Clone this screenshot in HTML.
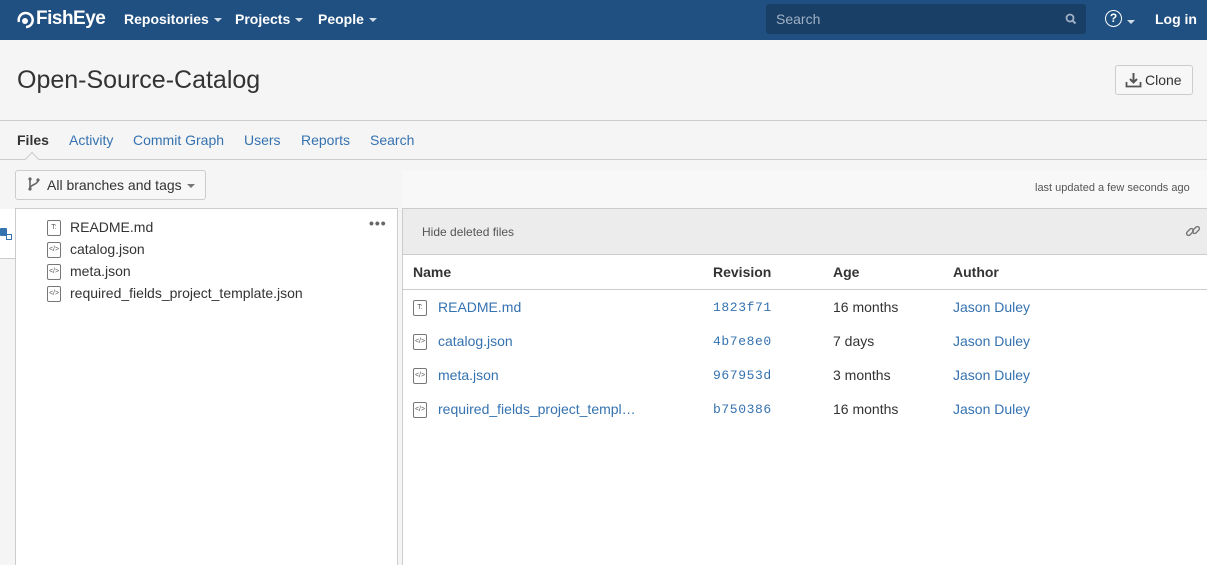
<!DOCTYPE html>
<html><head><style>
*{margin:0;padding:0;box-sizing:border-box}
body{width:1207px;height:565px;overflow:hidden;background:#f5f5f5;font-family:"Liberation Sans",sans-serif;font-size:14px;color:#333;position:relative}
.abs{position:absolute}
.nav{left:0;top:0;width:1207px;height:40px;background:#205081}
.nt{position:absolute;color:#fff;font-weight:bold;font-size:14px;top:11px;white-space:nowrap}
.caret{display:inline-block;width:0;height:0;border-left:4px solid transparent;border-right:4px solid transparent;border-top:4px solid currentColor;vertical-align:middle;margin-left:5px;opacity:.8}
a{color:#3572b0;text-decoration:none}
.tab{top:132px;font-size:14px;color:#3572b0}
.ic{display:inline-block;width:14px;height:16px;border:1px solid #777;border-radius:2px;font-size:7px;color:#555;text-align:center;line-height:14px;vertical-align:middle}
.lrow{left:47px;font-size:14px;color:#333}
.lrow .ic{margin-right:9px}
.mono{font-family:"Liberation Mono",monospace;font-size:13px;color:#3572b0;letter-spacing:0.6px}
</style></head><body>
<div class="abs nav"></div>
<svg class="abs" style="left:16px;top:10px" width="20" height="20" viewBox="0 0 20 20"><path d="M3 12 A7 7 0 1 1 10 17" fill="none" stroke="#fff" stroke-width="2.5"/><circle cx="9" cy="11" r="3" fill="#fff"/></svg>
<div class="nt" style="left:36px;top:8px;font-size:19px;letter-spacing:-0.5px">FishEye</div>
<div class="nt" style="left:124px">Repositories<span class="caret"></span></div>
<div class="nt" style="left:235px">Projects<span class="caret"></span></div>
<div class="nt" style="left:318px">People<span class="caret"></span></div>
<div class="abs" style="left:766px;top:4px;width:320px;height:30px;background:#1a3f66;border-radius:3px"></div>
<div class="abs" style="left:776px;top:11px;color:#9fb0c4;font-size:14px">Search</div>
<svg class="abs" style="left:1065px;top:13px" width="12" height="12" viewBox="0 0 12 12"><circle cx="5" cy="5" r="3.5" fill="none" stroke="#9fb0c4" stroke-width="1.8"/><path d="M7.5 7.5L10.5 10.5" stroke="#9fb0c4" stroke-width="2"/></svg>
<div class="abs" style="left:1105px;top:10px;width:17px;height:17px;border:1.6px solid #fff;border-radius:50%;color:#fff;font-size:12px;font-weight:bold;text-align:center;line-height:14px">?</div>
<div class="abs" style="left:1122px;top:13px;color:#fff"><span class="caret"></span></div>
<div class="nt" style="left:1155px">Log in</div>

<div class="abs" style="left:17px;top:66px;font-size:25px;color:#333">Open-Source-Catalog</div>
<div class="abs" style="left:1115px;top:65px;width:78px;height:30px;border:1px solid #ccc;border-radius:3px;background:#f7f7f7"></div>
<svg class="abs" style="left:1125px;top:72px" width="17" height="16" viewBox="0 0 17 16"><path d="M8.5 1v9M5 7l3.5 3.5L12 7" fill="none" stroke="#555" stroke-width="2"/><path d="M1.5 10v4.5h14V10" fill="none" stroke="#555" stroke-width="1.8"/></svg>
<div class="abs" style="left:1145px;top:72px;font-size:14px;color:#333">Clone</div>
<div class="abs" style="left:0;top:120px;width:1207px;height:1px;background:#ccc"></div>
<div class="abs tab" style="left:17px;color:#333;font-weight:bold">Files</div>
<div class="abs tab" style="left:69px">Activity</div>
<div class="abs tab" style="left:133px">Commit Graph</div>
<div class="abs tab" style="left:244px">Users</div>
<div class="abs tab" style="left:301px">Reports</div>
<div class="abs tab" style="left:370px">Search</div>
<div class="abs" style="left:0;top:159px;width:1207px;height:1px;background:#ccc"></div>
<div class="abs" style="left:27px;top:154px;width:10px;height:10px;background:#f5f5f5;border-left:1px solid #ccc;border-top:1px solid #ccc;transform:rotate(45deg)"></div>

<div class="abs" style="left:15px;top:170px;width:191px;height:30px;border:1px solid #ccc;border-radius:3px;background:#f7f7f7"></div>
<svg class="abs" style="left:27px;top:177px" width="14" height="14" viewBox="0 0 14 14"><circle cx="3" cy="2" r="1.6" fill="#666"/><circle cx="3" cy="12" r="1.6" fill="#666"/><circle cx="11" cy="3" r="1.6" fill="#666"/><path d="M3 2v10M11 3c0 5-8 4-8 9" fill="none" stroke="#666" stroke-width="1.6"/></svg>
<div class="abs" style="left:47px;top:177px;font-size:14px;color:#333">All branches and tags<span class="caret" style="color:#555"></span></div>
<div class="abs" style="left:402px;top:170px;width:805px;height:38px;background:#f8f8f8"></div>
<div class="abs" style="left:1035px;top:182px;font-size:11px;color:#555">last updated a few seconds ago</div>

<div class="abs" style="left:0;top:209px;width:15px;height:50px;background:#fff;border-bottom:1px solid #ccc"></div>
<div class="abs" style="left:0;top:228px;width:7px;height:8px;background:#3572b0;border-radius:1px"></div>
<div class="abs" style="left:6px;top:234px;width:6px;height:6px;border:1px solid #3572b0;background:#fff"></div>
<div class="abs" style="left:15px;top:208px;width:383px;height:357px;background:#fff;border:1px solid #ccc;border-bottom:none"></div>
<div class="abs" style="left:369px;top:215px;font-size:14px;color:#666;letter-spacing:1px;font-weight:bold">•••</div>
<div class="abs lrow" style="top:219px"><span class="ic">T:</span>README.md</div>
<div class="abs lrow" style="top:241px"><span class="ic">&lt;/&gt;</span>catalog.json</div>
<div class="abs lrow" style="top:263px"><span class="ic">&lt;/&gt;</span>meta.json</div>
<div class="abs lrow" style="top:285px"><span class="ic">&lt;/&gt;</span>required_fields_project_template.json</div>

<div class="abs" style="left:402px;top:208px;width:805px;height:357px;background:#fff;border-left:1px solid #ccc;border-top:1px solid #ccc"></div>
<div class="abs" style="left:403px;top:209px;width:804px;height:46px;background:#ececec;border-bottom:1px solid #ccc"></div>
<div class="abs" style="left:422px;top:225px;font-size:12px;color:#555">Hide deleted files</div>
<svg class="abs" style="left:1185px;top:223px" width="16" height="16" viewBox="0 0 16 16"><g fill="none" stroke="#777" stroke-width="1.4"><rect x="1" y="7" width="8" height="4" rx="2" transform="rotate(-45 5 9)"/><rect x="7" y="5" width="8" height="4" rx="2" transform="rotate(-45 11 7)"/></g></svg>
<div class="abs" style="left:413px;top:264px;font-weight:bold;color:#333">Name</div>
<div class="abs" style="left:713px;top:264px;font-weight:bold;color:#333">Revision</div>
<div class="abs" style="left:833px;top:264px;font-weight:bold;color:#333">Age</div>
<div class="abs" style="left:953px;top:264px;font-weight:bold;color:#333">Author</div>
<div class="abs" style="left:403px;top:289px;width:804px;height:1px;background:#ccc"></div>

<div class="abs" style="left:413px;top:299px"><span class="ic" style="margin-right:11px">T:</span><a>README.md</a></div>
<div class="abs mono" style="left:713px;top:300px">1823f71</div><div class="abs" style="left:833px;top:299px">16 months</div><div class="abs" style="left:953px;top:299px"><a>Jason Duley</a></div>
<div class="abs" style="left:413px;top:333px"><span class="ic" style="margin-right:11px">&lt;/&gt;</span><a>catalog.json</a></div>
<div class="abs mono" style="left:713px;top:334px">4b7e8e0</div><div class="abs" style="left:833px;top:333px">7 days</div><div class="abs" style="left:953px;top:333px"><a>Jason Duley</a></div>
<div class="abs" style="left:413px;top:367px"><span class="ic" style="margin-right:11px">&lt;/&gt;</span><a>meta.json</a></div>
<div class="abs mono" style="left:713px;top:368px">967953d</div><div class="abs" style="left:833px;top:367px">3 months</div><div class="abs" style="left:953px;top:367px"><a>Jason Duley</a></div>
<div class="abs" style="left:413px;top:401px"><span class="ic" style="margin-right:11px">&lt;/&gt;</span><a>required_fields_project_templ…</a></div>
<div class="abs mono" style="left:713px;top:402px">b750386</div><div class="abs" style="left:833px;top:401px">16 months</div><div class="abs" style="left:953px;top:401px"><a>Jason Duley</a></div>
</body></html>
